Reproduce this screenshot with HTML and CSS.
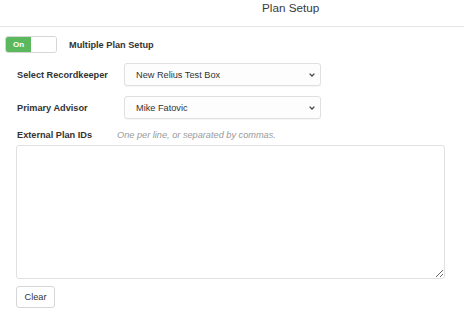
FILE: index.html
```html
<!DOCTYPE html>
<html>
<head>
<meta charset="utf-8">
<link rel="stylesheet" href="styles.css">
</head>
<body>
<div class="header"><span class="title">Plan Setup</span></div>
<div class="toggle-row">
  <div class="toggle"><span class="toggle-on">On</span><span class="toggle-off"></span></div>
  <span class="toggle-label">Multiple Plan Setup</span>
</div>
<div class="form">
  <div class="row">
    <span class="label">Select Recordkeeper</span>
    <div class="select"><span>New Relius Test Box</span>
      <svg class="chev" width="6" height="4" viewBox="0 0 6 4"><path d="M0.6 0.6 L3 3 L5.4 0.6" fill="none" stroke="#444" stroke-width="1.3"/></svg>
    </div>
  </div>
  <div class="row">
    <span class="label">Primary Advisor</span>
    <div class="select"><span>Mike Fatovic</span>
      <svg class="chev" width="6" height="4" viewBox="0 0 6 4"><path d="M0.6 0.6 L3 3 L5.4 0.6" fill="none" stroke="#444" stroke-width="1.3"/></svg>
    </div>
  </div>
  <div class="ids-head">
    <span class="label">External Plan IDs</span>
    <span class="hint">One per line, or separated by commas.</span>
  </div>
  <textarea class="ids"></textarea>
  <button class="clear">Clear</button>
</div>
</body>
</html>
```
FILE: styles.css
```css
html, body {
  margin: 0;
  padding: 0;
  background: #fff;
}
body {
  font-family: "Liberation Sans", Arial, sans-serif;
  font-size: 9.2px;
  color: #333;
  width: 464px;
  height: 314px;
  overflow: hidden;
}
.header {
  height: 27px;
  border-bottom: 1px solid #e6e6e6;
  padding-left: 262px;
  box-sizing: border-box;
}
.title {
  display: block;
  font-size: 11.7px;
  line-height: 16px;
  color: #3a3a3a;
}
.toggle-row {
  display: flex;
  align-items: center;
  margin-top: 9px;
  padding-left: 5px;
  gap: 12px;
}
.toggle {
  display: flex;
  width: 52px;
  height: 17px;
  border: 1px solid #d6d6d6;
  border-radius: 3px;
  box-sizing: border-box;
  overflow: hidden;
}
.toggle-on {
  width: 25px;
  background: #5cb85c;
  color: #fff;
  font-weight: bold;
  font-size: 8px;
  display: flex;
  align-items: center;
  justify-content: center;
}
.toggle-off {
  flex: 1;
  background: #fff;
}
.toggle-label {
  font-weight: bold;
}
.form {
  padding-left: 16px;
  margin-top: 10px;
  display: flex;
  flex-direction: column;
  align-items: flex-start;
}
.row {
  display: flex;
  align-items: center;
  height: 23px;
  margin-bottom: 10px;
}
.label {
  font-weight: bold;
  width: 108px;
  padding-left: 1px;
  box-sizing: border-box;
}
.select {
  width: 197px;
  height: 23px;
  box-sizing: border-box;
  border: 1px solid #e0e0e0;
  border-radius: 3px;
  background: #fdfdfd;
  box-shadow: 0 1px 1px rgba(0,0,0,0.04);
  display: flex;
  align-items: center;
  justify-content: space-between;
  padding: 0 5px 0 11px;
}
.chev {
  display: block;
}
.ids-head {
  display: flex;
  align-items: center;
  height: 12px;
  margin-top: 0;
}
.ids-head .label {
  width: 101px;
}
.hint {
  color: #999;
  font-style: italic;
}
.ids {
  margin: 4px 0 0 0;
  width: 429px;
  height: 134px;
  box-sizing: border-box;
  border: 1px solid #e0e0e0;
  border-radius: 3px;
  background: #fff;
  padding: 4px 6px;
  font-family: inherit;
  font-size: 9.2px;
  display: block;
}
.clear {
  margin-top: 7px;
  width: 39px;
  height: 22px;
  box-sizing: border-box;
  border: 1px solid #d6d6d6;
  border-radius: 3px;
  background: #fff;
  color: #333;
  font-family: inherit;
  font-size: 9.2px;
  padding: 0;
}
```
